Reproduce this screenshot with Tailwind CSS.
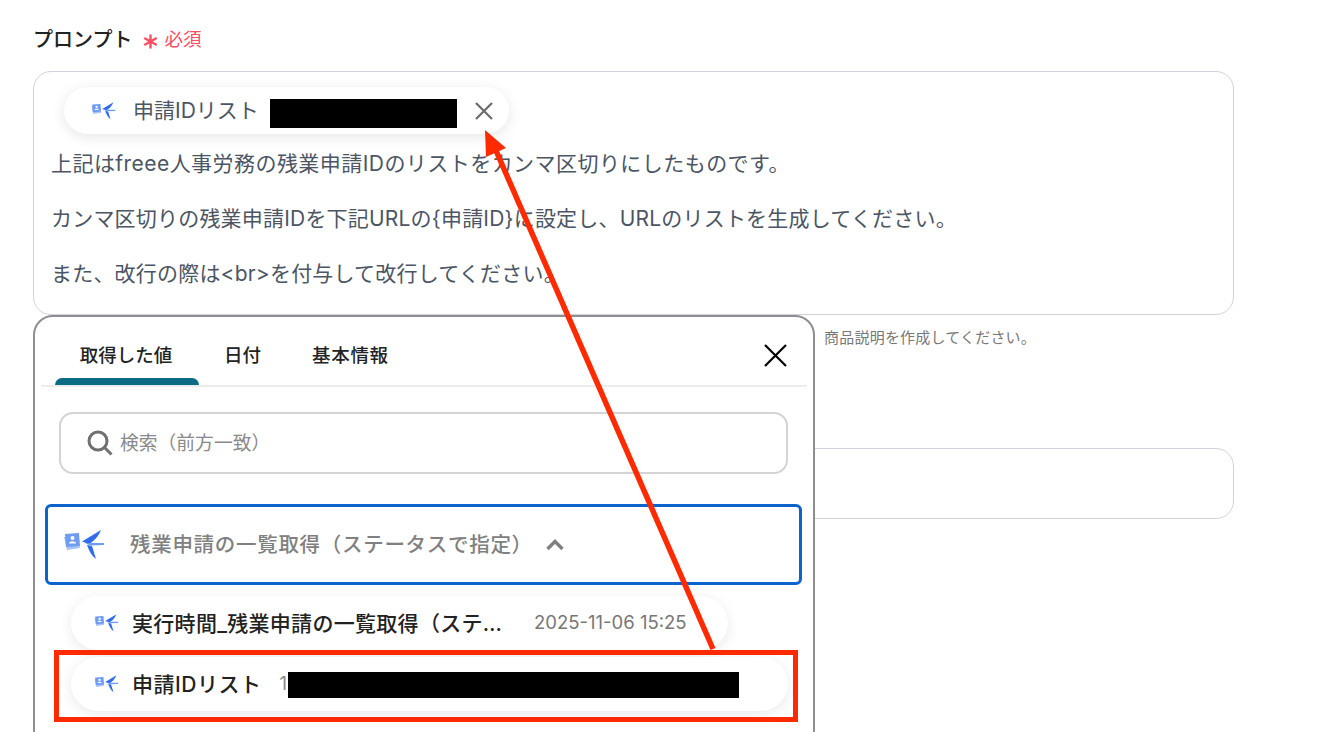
<!DOCTYPE html>
<html lang="ja">
<head>
  <meta charset="UTF-8" />
  <title>プロンプト</title>
  <script src="https://cdn.jsdelivr.net/npm/@tailwindcss/browser@4"></script>
</head>
<body class="bg-white w-[1324px] h-[732px] overflow-hidden relative font-['Inter','Noto_Sans_CJK_JP',sans-serif]">

  <!-- Form -->
  <main class="pl-[33px] w-[1234px] pt-[27px]">
    <div class="flex items-center h-[26px]">
      <span class="text-[20px] leading-[26px] text-[#222] font-medium">プロンプト</span>
      <span class="ml-[11px] text-[#fb4d63] text-[18.5px] flex items-center">
        <svg class="w-[15px] h-[15px] mr-[6px] mt-[2px]" viewBox="0 0 14 14" fill="none" stroke="#fb4d63" stroke-width="2.2"><path d="M7 0.5v13M1.2 3.800l11.600 6.400M12.800 3.800L1.200 10.200"/></svg>
        必須
      </span>
    </div>

    <div class="mt-[18px] h-[244px] rounded-[18px] border border-[#d0d3de] pl-[17px] pt-[15px]">
      <div class="ml-[13px] w-[445px] h-[47px] rounded-full bg-white shadow-[0_3px_14px_rgba(0,0,0,0.10)] flex items-center pl-[27px]">
        <svg class="w-[26px] h-[18px]" viewBox="0 0 44 30"><use href="#freee-logo"/></svg>
        <span class="ml-[16px] text-[21px] text-[#4b5563]">申請IDリスト</span>
        <span class="ml-[11px] mt-[6px] w-[187px] h-[29px] bg-black"></span>
        <svg class="ml-[17px] w-[20px] h-[20px]" viewBox="0 0 20 20" fill="none" stroke="#6b6b6b" stroke-width="2.2"><path d="M2 2l16 16M18 2L2 18"/></svg>
      </div>
      <div class="mt-[16px] text-[21px] leading-[28px] tracking-[0.2px] text-[#4b5563]">
        <p class="tracking-[0.45px]">上記はfreee人事労務の残業申請IDのリストをカンマ区切りにしたものです。</p>
        <p class="mt-[27px]">カンマ区切りの残業申請IDを下記URLの{申請ID}に設定し、URLのリストを生成してください。</p>
        <p class="mt-[27px]">また、改行の際は&lt;br&gt;を付与して改行してください。</p>
      </div>
    </div>

    <p class="mt-[13px] text-[15px] leading-[20px] tracking-[0.2px] text-[#777] text-right pr-[198px]">商品説明を作成してください。</p>

    <div class="mt-[100px] h-[71px] rounded-[18px] border border-[#d0d3de]"></div>
  </main>

  <!-- Value picker popover -->
  <section class="absolute left-[33px] top-[315px] w-[782px] h-[440px] bg-white border-2 border-[#8f8f8f] rounded-[20px] px-[6px]">
    <div class="relative h-[70px] border-b-2 border-[#ececec] flex items-start text-[18.5px] font-medium text-[#222]">
      <div class="ml-[14px] w-[144px] h-[68px] relative flex justify-center pt-[25px]">
        <span class="leading-[26px] -translate-x-px">取得した値</span>
        <span class="absolute left-0 right-0 bottom-0 h-[7px] bg-[#0b6b85] rounded-t-[7px]"></span>
      </div>
      <span class="ml-[25px] mt-[25px] leading-[26px]">日付</span>
      <span class="ml-[51px] mt-[25px] leading-[26px] tracking-[0.7px]">基本情報</span>
      <svg class="absolute right-[20px] top-[27px] w-[23px] h-[23px]" viewBox="0 0 23 23" fill="none" stroke="#000" stroke-width="2.2"><path d="M1 1l21 21M22 1L1 22"/></svg>
    </div>

    <div class="mt-[25px] ml-[18px] w-[729px] h-[62px] rounded-[14px] border-2 border-[#d4d4d4] flex items-center pl-[26px]">
      <svg class="w-[26px] h-[26px]" viewBox="0 0 26 26" fill="none" stroke="#707070" stroke-width="3"><circle cx="11" cy="11" r="9"/><path d="M17.500 17.500l7 7"/></svg>
      <span class="ml-[7px] mt-[3px] text-[18.8px] text-[#8a8a8a]">検索（前方一致）</span>
    </div>

    <div class="mt-[30px] ml-[4px] w-[757px] h-[81px] rounded-[6px] border-[3px] border-[#0a64cc] flex items-center pl-[15px]">
      <svg class="w-[44px] h-[30px]" viewBox="0 0 44 30"><use href="#freee-logo"/></svg>
      <span class="ml-[23px] mt-[2px] text-[20.5px] font-medium text-[#808080] tracking-[0.7px]">残業申請の一覧取得（ステータスで指定）</span>
      <svg class="ml-[13px] w-[18px] h-[12px]" viewBox="0 0 18 12" fill="none" stroke="#808080" stroke-width="3.400"><path d="M1.500 10L9 2.500 16.500 10"/></svg>
    </div>

    <div class="mt-[11px] ml-[30px] w-[657px] h-[54px] rounded-full bg-white shadow-[0_3px_14px_rgba(0,0,0,0.09)] flex items-center pl-[23px]">
      <svg class="w-[26px] h-[18px]" viewBox="0 0 44 30"><use href="#freee-logo"/></svg>
      <span class="ml-[12px] mt-[2px] text-[21px] font-medium text-[#222] tracking-[0.3px] w-[381px] whitespace-nowrap">実行時間_残業申請の一覧取得（ステ…</span>
      <span class="ml-[21px] shrink-0 text-[18.5px] text-[#777]">2025-11-06 15:25</span>
    </div>

    <div class="mt-[7px] ml-[30px] w-[717px] h-[54px] rounded-full bg-white shadow-[0_3px_14px_rgba(0,0,0,0.09)] flex items-center pl-[23px]">
      <svg class="w-[26px] h-[18px]" viewBox="0 0 44 30"><use href="#freee-logo"/></svg>
      <span class="ml-[12px] mt-[2px] text-[21px] font-medium text-[#222] tracking-[0.5px]">申請IDリスト</span>
      <span class="ml-[18px] text-[18.5px] text-[#888]">1</span>
      <span class="ml-[1px] mt-[2px] w-[451px] h-[26px] bg-black"></span>
    </div>
  </section>

  <!-- Red annotations -->
  <div class="absolute left-[54px] top-[650px] w-[744px] h-[72px] border-[5px] border-[#ff2a00]"></div>
  <svg class="absolute left-0 top-0 w-[1324px] h-[732px] pointer-events-none" viewBox="0 0 1324 732" fill="none">
    <path d="M713 649L494 146" stroke="#ff2a00" stroke-width="5.500"/>
    <path d="M485 130L506 148L486 157Z" fill="#ff2a00"/>
  </svg>

  <!-- Logo used by the chips -->
  <svg class="absolute w-0 h-0">
    <defs>
      <g id="freee-logo">
        <path d="M1 7L14 5L17 18L4 20Z" fill="#a9c3f7"/>
        <path d="M2 4L16 3L17 16L3 17Z" fill="#6f9cf3"/>
        <circle cx="9.500" cy="8" r="2" fill="#fff"/>
        <path d="M6 13.500c0-3 7-3 7 0z" fill="#fff"/>
        <path d="M19 11.500L38 0C35 7 31 11 26 14Z" fill="#2f6bea"/>
        <path d="M22 13L41 13L41 15L27 15.500Z" fill="#6f9cf3"/>
        <path d="M24 15L29 16L33 29C29 26 26 21 24 15Z" fill="#2f6bea"/>
      </g>
    </defs>
  </svg>
</body>
</html>
